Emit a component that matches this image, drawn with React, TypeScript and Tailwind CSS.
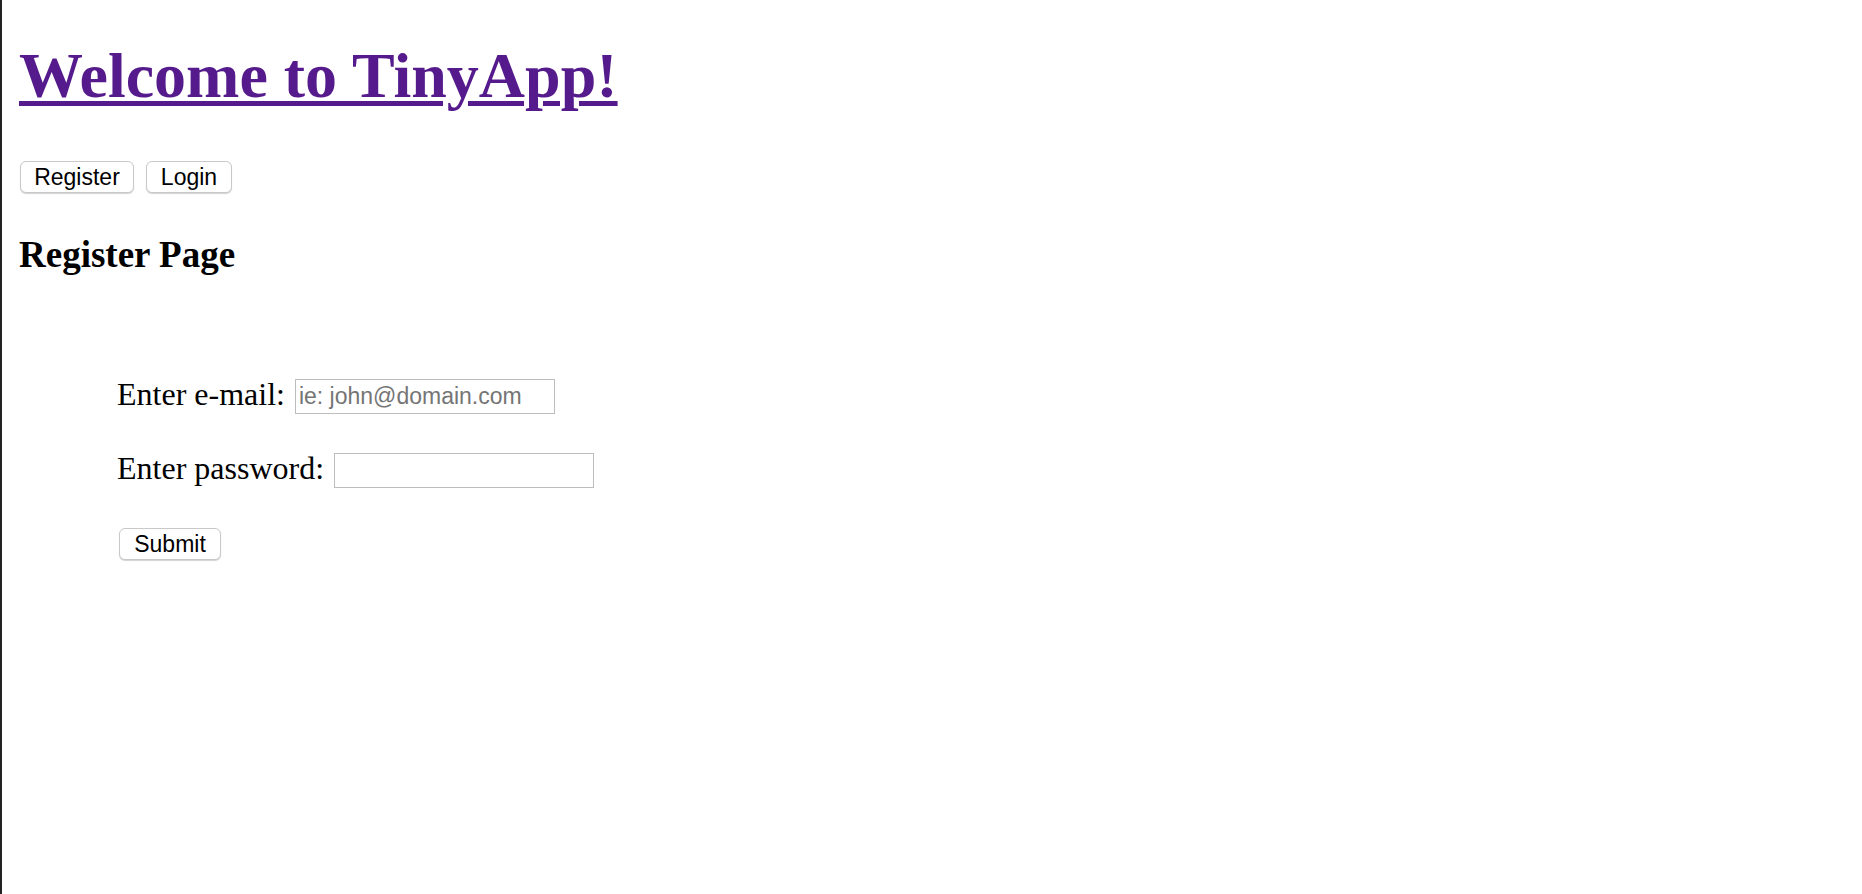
import React from "react";

const serif = { fontFamily: '"Liberation Serif", "Times New Roman", serif' };

function PageButton({ label, width }: { label: string; width: string }) {
  return (
    <button
      type="button"
      className={`${width} h-[32px] bg-white border border-[#c9c9c9] rounded-[6px] shadow-[0_1px_1px_rgba(0,0,0,0.18)] text-[23px] leading-none text-black font-['Liberation_Sans',Arial,sans-serif] flex items-center justify-center`}
    >
      {label}
    </button>
  );
}

export default function App() {
  return (
    <div className="min-h-screen h-[894px] bg-white border-l-2 border-[#222222] pl-[17px]" style={serif}>
      <h1 className="pt-[39px] text-[64px] leading-[74px] font-bold">
        <a
          href="#"
          className="text-[#551a8b] underline decoration-[5px] underline-offset-[4px]"
        >
          Welcome to TinyApp!
        </a>
      </h1>

      <div className="mt-[48px] flex gap-[12px] ml-[1px]">
        <PageButton label="Register" width="w-[114px]" />
        <PageButton label="Login" width="w-[86px]" />
      </div>

      <h3 className="mt-[40px] text-[37px] leading-[44px] font-bold text-black">Register Page</h3>

      <form className="mt-[102px] pl-[98px] flex flex-col gap-[39px]" onSubmit={(e) => e.preventDefault()}>
        <div className="flex items-start gap-[10px]">
          <label className="text-[32px] leading-[31px] text-black">Enter e-mail:</label>
          <input
            type="email"
            placeholder="ie: john@domain.com"
            className="w-[260px] h-[35px] border border-[#bdbdbd] bg-white px-[3px] text-[23px] font-['Liberation_Sans',Arial,sans-serif] placeholder:text-[#757575] outline-none"
          />
        </div>
        <div className="flex items-start gap-[10px]">
          <label className="text-[32px] leading-[31px] text-black">Enter password:</label>
          <input
            type="password"
            className="w-[260px] h-[35px] border border-[#bdbdbd] bg-white px-[3px] text-[23px] font-['Liberation_Sans',Arial,sans-serif] outline-none"
          />
        </div>
        <div className="ml-[2px] mt-[1px]">
          <PageButton label="Submit" width="w-[102px]" />
        </div>
      </form>
    </div>
  );
}
